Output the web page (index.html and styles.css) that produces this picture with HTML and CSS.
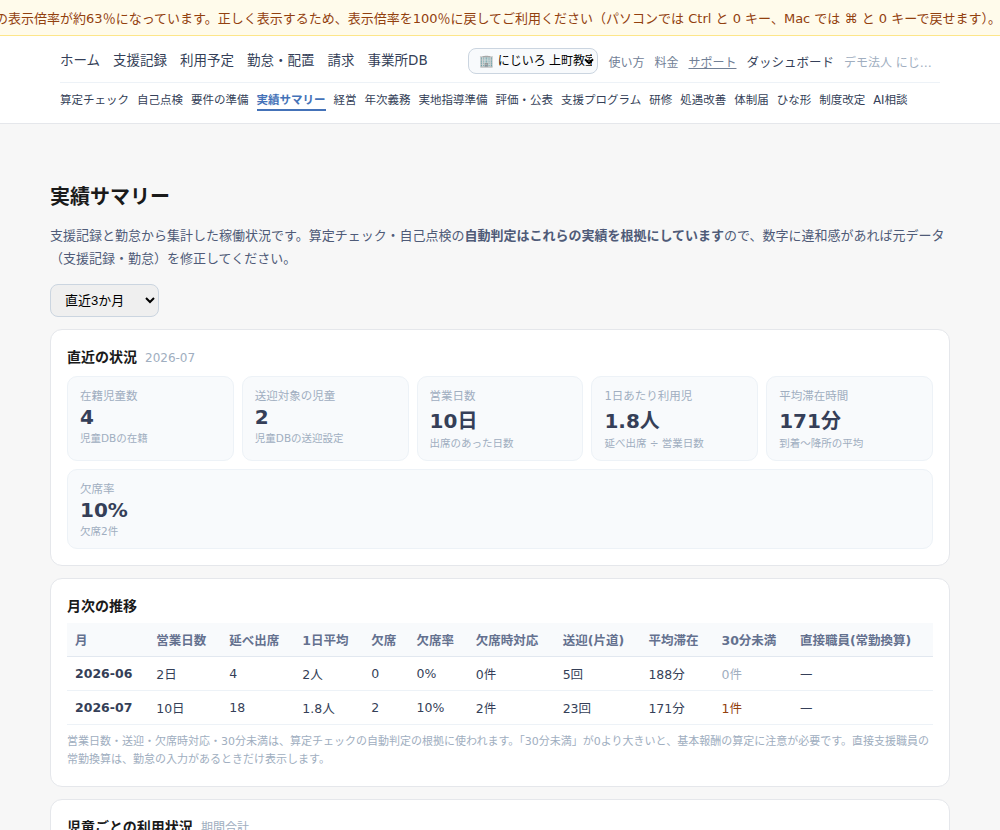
FILE: index.html
```html
<!DOCTYPE html>
<html lang="ja">
<head>
<meta charset="utf-8">
<title>実績サマリー</title>
<link rel="stylesheet" href="styles.css">
</head>
<body>
<div class="zoom-banner"><span>の表示倍率が約63％になっています。正しく表示するため、表示倍率を100％に戻してご利用ください（パソコンでは Ctrl と 0 キー、Mac では ⌘ と 0 キーで戻せます）。</span></div>
<header class="header">
  <div class="header-inner">
    <div class="header-top">
      <nav class="main-nav">
        <a>ホーム</a><a>支援記録</a><a>利用予定</a><a>勤怠・配置</a><a>請求</a><a>事業所DB</a>
      </nav>
      <div class="tools">
        <div class="office-wrap">
          <select class="office"><option>🏢 にじいろ 上町教室</option></select>
          <svg class="chevron" width="10" height="7" viewBox="0 0 10 7"><path d="M1 1.2 5 5.2 9 1.2" fill="none" stroke="#000" stroke-width="2"/></svg>
        </div>
        <a>使い方</a><a>料金</a><a class="support">サポート</a><a class="dash">ダッシュボード</a><span class="org">デモ法人 にじいろ福祉会</span>
      </div>
    </div>
    <nav class="sub-nav">
      <a>算定チェック</a><a>自己点検</a><a>要件の準備</a><a class="active">実績サマリー</a><a>経営</a><a>年次義務</a><a>実地指導準備</a><a>評価・公表</a><a>支援プログラム</a><a>研修</a><a>処遇改善</a><a>体制届</a><a>ひな形</a><a>制度改定</a><a>AI相談</a>
    </nav>
  </div>
</header>
<main class="main">
  <h1>実績サマリー</h1>
  <p class="lead">支援記録と勤怠から集計した稼働状況です。算定チェック・自己点検の<strong>自動判定はこれらの実績を根拠にしています</strong>ので、数字に違和感があれば元データ（支援記録・勤怠）を修正してください。</p>
  <select class="period"><option>直近3か月</option><option>直近6か月</option><option>直近12か月</option></select>
  <section class="card">
    <h2 class="with-stats">直近の状況<span>2026-07</span></h2>
    <div class="stats">
      <div class="stat"><div class="label">在籍児童数</div><div class="value">4</div><div class="note">児童DBの在籍</div></div>
      <div class="stat"><div class="label">送迎対象の児童</div><div class="value">2</div><div class="note">児童DBの送迎設定</div></div>
      <div class="stat"><div class="label">営業日数</div><div class="value">10日</div><div class="note">出席のあった日数</div></div>
      <div class="stat"><div class="label">1日あたり利用児</div><div class="value">1.8人</div><div class="note">延べ出席 ÷ 営業日数</div></div>
      <div class="stat"><div class="label">平均滞在時間</div><div class="value">171分</div><div class="note">到着〜降所の平均</div></div>
      <div class="stat"><div class="label">欠席率</div><div class="value">10%</div><div class="note">欠席2件</div></div>
    </div>
  </section>
  <section class="card">
    <h2>月次の推移</h2>
    <table class="monthly">
      <thead><tr><th>月</th><th>営業日数</th><th>延べ出席</th><th>1日平均</th><th>欠席</th><th>欠席率</th><th>欠席時対応</th><th>送迎(片道)</th><th>平均滞在</th><th>30分未満</th><th>直接職員(常勤換算)</th></tr></thead>
      <tbody>
        <tr><td class="month">2026-06</td><td>2日</td><td>4</td><td>2人</td><td>0</td><td>0%</td><td>0件</td><td>5回</td><td>188分</td><td class="muted">0件</td><td>—</td></tr>
        <tr><td class="month">2026-07</td><td>10日</td><td>18</td><td>1.8人</td><td>2</td><td>10%</td><td>2件</td><td>23回</td><td>171分</td><td class="warn">1件</td><td>—</td></tr>
      </tbody>
    </table>
    <p class="help">営業日数・送迎・欠席時対応・30分未満は、算定チェックの自動判定の根拠に使われます。「30分未満」が0より大きいと、基本報酬の算定に注意が必要です。直接支援職員の常勤換算は、勤怠の入力があるときだけ表示します。</p>
  </section>
  <section class="card">
    <h2>児童ごとの利用状況<span>期間合計</span></h2>
  </section>
</main>
</body>
</html>
```
FILE: styles.css
```css
* { box-sizing: border-box; }
html { overflow: hidden; }
body {
  margin: 0;
  height: 830px;
  overflow: hidden;
  background: #f7f7f7;
  color: #1a1a1a;
  font-family: "DejaVu Sans", "Noto Sans CJK JP", sans-serif;
}
.zoom-banner {
  display: flex;
  justify-content: center;
  height: 36px;
  padding: 1px 4px 0 0;
  line-height: 35px;
  overflow: hidden;
  white-space: nowrap;
  background: #fffbeb;
  border-bottom: 1px solid #fde68a;
  color: #92400e;
  font-size: 13px;
}
.header { height: 88px; background: #fff; border-bottom: 1px solid #e5e7eb; }
.header-inner { width: 880px; margin: 0 auto; }
.header-top {
  display: flex;
  align-items: center;
  justify-content: space-between;
  height: 47px;
  padding: 3px 8px 0 0;
  border-bottom: 1px solid #edf2f7;
  white-space: nowrap;
}
.main-nav { display: flex; gap: 13px; padding-bottom: 4px; font-size: 13.5px; color: #353f58; }
.tools { display: flex; align-items: center; gap: 10px; font-size: 12px; color: #718096; }
.office-wrap { position: relative; height: 26px; }
.chevron { position: absolute; right: 4px; top: 10px; }
.office {
  appearance: none;
  display: block;
  width: 130px;
  height: 26px;
  padding: 0 5px 0 10px;
  border: 1px solid #cbd5e0;
  border-radius: 8px;
  background: #f8fafc;
  font-family: "Liberation Sans", "Noto Sans CJK JP", sans-serif;
  font-size: 12px;
  color: #000;
}
.tools a, .org { padding-top: 2px; }
.support { text-decoration: underline; }
.tools .dash { color: #353f58; font-size: 12.5px; }
.org { width: 88px; overflow: hidden; text-overflow: ellipsis; color: #a0aec0; }
.sub-nav { display: flex; gap: 8px; padding-top: 7px; font-size: 11.5px; line-height: 21px; color: #353f58; white-space: nowrap; }
.sub-nav a { height: 21px; }
.sub-nav .active { color: #4472b8; font-weight: 700; border-bottom: 2px solid #4472b8; }
.main { width: 900px; margin: 0 auto; padding-top: 57px; }
h1 { margin: 0; font-size: 20px; line-height: 32px; }
.lead { margin: 11px 0 13.2px; font-size: 13px; line-height: 23.4px; color: #4f5b78; }
.period {
  display: block;
  width: 109px;
  height: 33px;
  padding: 0 10px;
  border: 1px solid #cbd5e0;
  border-radius: 8px;
  background: #efefef;
  font-family: "Liberation Sans", "Noto Sans CJK JP", sans-serif;
  font-size: 13px;
  color: #000;
}
.card { margin-top: 12px; padding: 16px; background: #fff; border: 1px solid #e5e7eb; border-radius: 12px; }
h2 { margin: 0 0 6px; font-size: 14px; line-height: 22px; }
h2.with-stats { margin-bottom: 7px; }
h2 span { margin-left: 8px; font-size: 12px; font-weight: 400; color: #a0aec0; }
.stats { display: flex; flex-wrap: wrap; gap: 8px; }
.stat { flex: 1 1 150px; padding: 10px 12px; background: #f8fafc; border: 1px solid #edf2f7; border-radius: 10px; }
.label { font-size: 11.5px; color: #a0aec0; }
.value { margin: 2px 0 1px; font-size: 20px; font-weight: 700; color: #353f58; }
.note { font-size: 10.5px; color: #a0aec0; }
.monthly { width: 100%; border-collapse: collapse; font-size: 12.5px; color: #353f58; }
.monthly th { height: 33px; padding: 0 8px; text-align: left; background: #f8fafc; color: #64718f; border-bottom: 1px solid #e2e8f0; white-space: nowrap; }
.monthly td { height: 34px; padding: 0 8px; border-bottom: 1px solid #edf2f7; }
.monthly .month { font-weight: 700; white-space: nowrap; }
.monthly .muted { color: #a0aec0; }
.monthly .warn { color: #92400e; }
.help { margin: 8px 0 1px; font-size: 11px; line-height: 18px; color: #a0aec0; }
```
